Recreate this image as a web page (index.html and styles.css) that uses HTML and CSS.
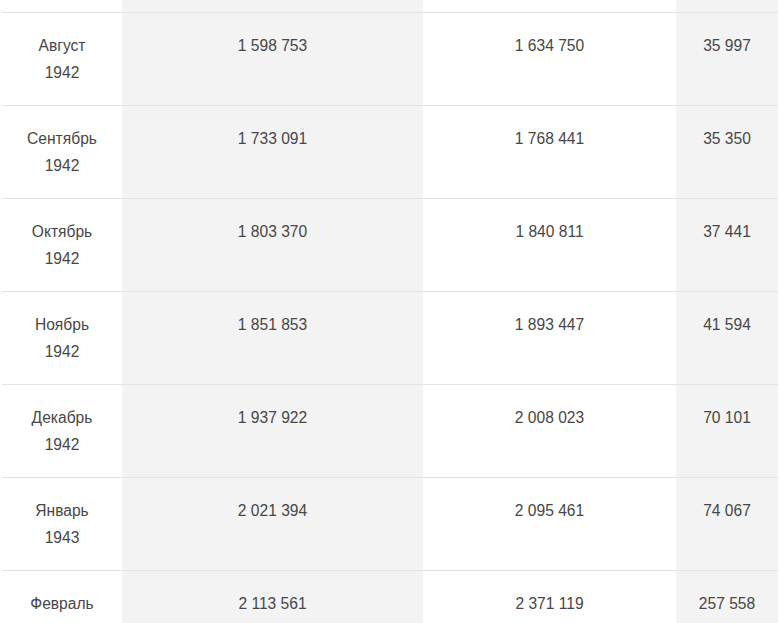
FILE: index.html
```html
<!DOCTYPE html>
<html lang="ru">
<head>
<meta charset="utf-8">
<title>Таблица</title>
<link rel="stylesheet" href="styles.css">
</head>
<body>
<div class="wrap">
<table class="data">
<colgroup>
<col class="c1"><col class="c2"><col class="c3"><col class="c4">
</colgroup>
<tbody>
<tr class="top"><td></td><td></td><td></td><td></td></tr>
<tr><td>Август<br>1942</td><td>1 598 753</td><td>1 634 750</td><td>35 997</td></tr>
<tr><td>Сентябрь<br>1942</td><td>1 733 091</td><td>1 768 441</td><td>35 350</td></tr>
<tr><td>Октябрь<br>1942</td><td>1 803 370</td><td>1 840 811</td><td>37 441</td></tr>
<tr><td>Ноябрь<br>1942</td><td>1 851 853</td><td>1 893 447</td><td>41 594</td></tr>
<tr><td>Декабрь<br>1942</td><td>1 937 922</td><td>2 008 023</td><td>70 101</td></tr>
<tr><td>Январь<br>1943</td><td>2 021 394</td><td>2 095 461</td><td>74 067</td></tr>
<tr><td>Февраль<br>1943</td><td>2 113 561</td><td>2 371 119</td><td>257 558</td></tr>
</tbody>
</table>
</div>
</body>
</html>
```
FILE: styles.css
```css
html, body {
  margin: 0;
  padding: 0;
  background: #ffffff;
}
.wrap {
  padding: 0 2px;
  height: 623px;
  overflow: hidden;
}
.data {
  width: 776px;
  border-collapse: collapse;
  table-layout: fixed;
  font-family: "Liberation Sans", Arial, sans-serif;
  font-size: 15.6px;
  line-height: 27px;
  color: #474747;
}
.c1 { width: 120px; }
.c2 { width: 301px; background: #f3f3f3; }
.c3 { width: 253px; }
.c4 { width: 102px; background: #f3f3f3; }
.data td {
  text-align: center;
  vertical-align: top;
  padding: 19px 4px 19px;
  border-bottom: 1px solid #e3e3e3;
}
.data tr.top td {
  padding: 0;
  height: 12px;
}
```
